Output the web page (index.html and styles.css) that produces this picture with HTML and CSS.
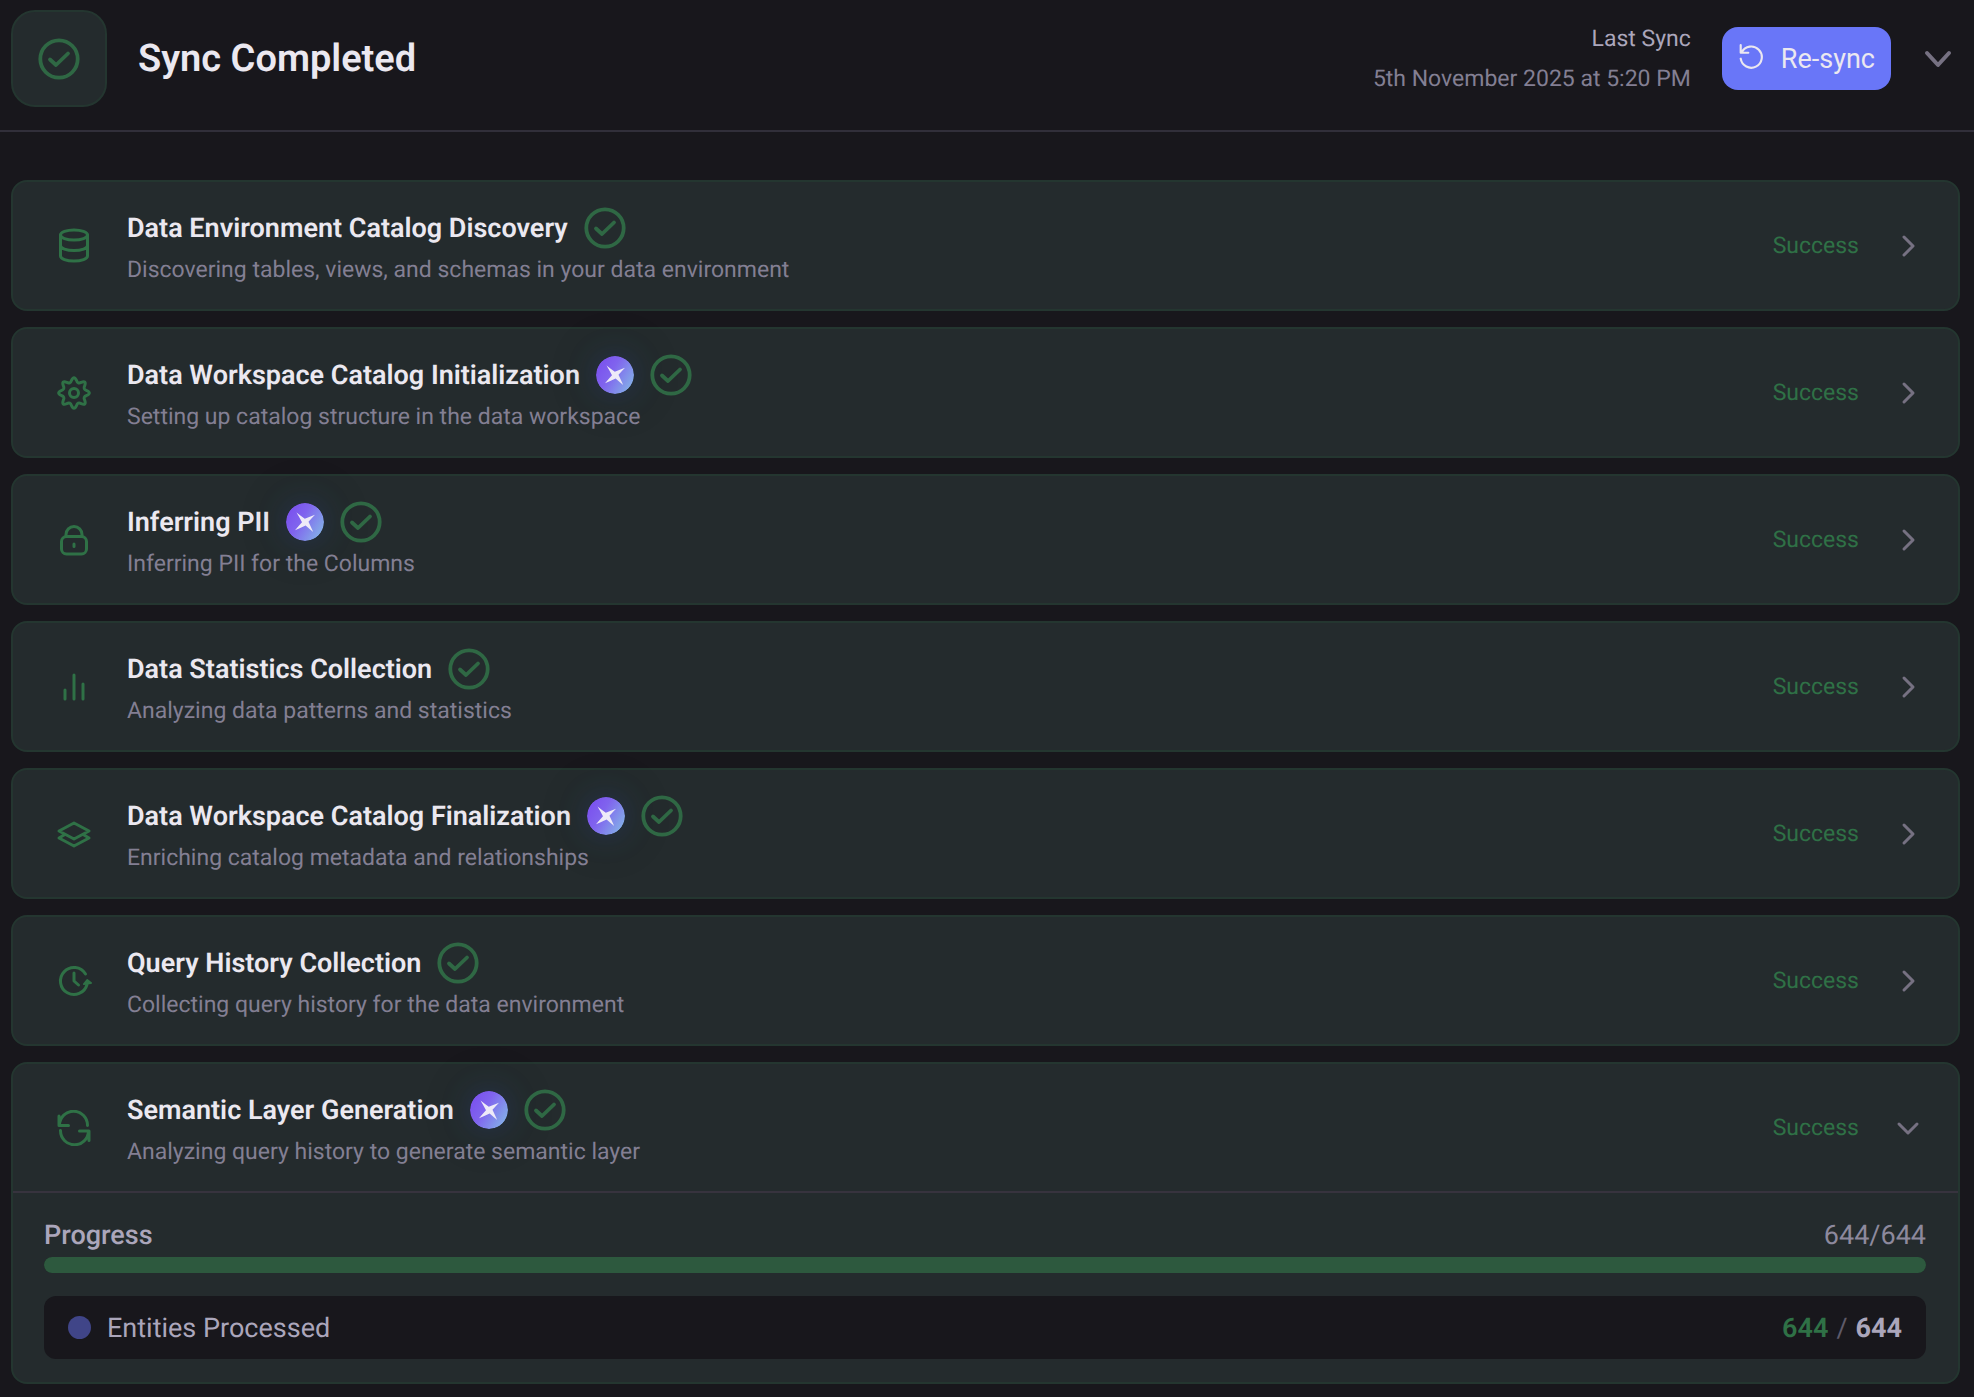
FILE: index.html
```html
<!DOCTYPE html>
<html lang="en">
<head>
<meta charset="utf-8">
<title>Sync Completed</title>
<link rel="stylesheet" href="styles.css">
</head>
<body>
<svg class="defs" aria-hidden="true">
  <defs>
    <linearGradient id="spark-fill" x1="0" y1="0.2" x2="1" y2="0.8">
      <stop offset="0" stop-color="#7a4fee"/>
      <stop offset="0.4" stop-color="#8064ee"/>
      <stop offset="1" stop-color="#84b4e8"/>
    </linearGradient>
    <symbol id="check" viewBox="0 0 42 42">
      <circle cx="21" cy="21" r="18.700" stroke-width="3.800"/>
      <path d="M12 21.500l6 5.500L30 15.500" stroke-width="3.800"/>
    </symbol>
    <symbol id="spark" viewBox="0 0 38 38">
      <circle cx="19" cy="19" r="19" fill="url(#spark-fill)" stroke="none"/>
      <path d="M10.500 9.500Q15.500 13.500 18.800 15.700Q23.500 14 29 11.800Q25.500 15.500 22.500 18.700Q25 24 27.200 29Q23 25.500 19.600 22.500Q14.500 25 9 27.200Q12.500 23 16 19.200Q13.500 14.500 10.500 9.500z" fill="#eeeaf8" stroke="none"/>
    </symbol>
    <symbol id="right" viewBox="0 0 36 36"><path d="M14 9l9 9-9 9" stroke-width="3"/></symbol>
    <symbol id="down" viewBox="0 0 36 36"><path d="M9 14l9 9 9-9" stroke-width="3"/></symbol>
  </defs>
</svg>
<header class="top">
  <div class="badge"><svg class="check"><use href="#check"/></svg></div>
  <h1 class="heading">Sync Completed</h1>
  <div class="last">
    <span class="last-label">Last Sync</span>
    <time class="last-time">5th November 2025 at 5:20 PM</time>
  </div>
  <button class="resync" type="button">
    <svg class="resync-icon" viewBox="0 0 24 24"><path d="M2.500 2v7H9.500M3.500 8.500A9.800 9.800 0 1 1 2.500 14.500" stroke-width="2"/></svg>
    Re-sync
  </button>
  <button class="toggle" type="button" aria-label="Collapse"><svg class="chevron-lg" viewBox="0 0 44 36"><path d="M11 12l11 12 11-12" stroke-width="4"/></svg></button>
</header>
<main class="steps">
  <section class="card">
    <div class="row">
      <svg class="icon" viewBox="0 0 36 36"><ellipse cx="18" cy="7" rx="13.500" ry="5"/><path d="M4.500 7v21c0 2.800 6 5 13.500 5s13.500-2.200 13.500-5V7M4.500 17.500c0 2.800 6 5 13.500 5s13.500-2.200 13.500-5"/></svg>
      <div class="text">
        <h2 class="title">Data Environment Catalog Discovery <svg class="check"><use href="#check"/></svg></h2>
        <p class="desc">Discovering tables, views, and schemas in your data environment</p>
      </div>
      <span class="status">Success</span>
      <button class="toggle" type="button" aria-label="Expand"><svg class="chevron"><use href="#right"/></svg></button>
    </div>
  </section>
  <section class="card">
    <div class="row">
      <svg class="icon" viewBox="-18 -18 36 36"><circle r="4.500"/><path d="M-2.500-12.650Q0-18 2.500-12.650Q3.600-8.800 7.200-10.700Q12.700-12.700 10.700-7.200Q8.800-3.600 12.650-2.500Q18 0 12.650 2.500Q8.800 3.600 10.700 7.200Q12.700 12.700 7.200 10.700Q3.600 8.800 2.500 12.650Q0 18-2.500 12.650Q-3.600 8.800-7.200 10.700Q-12.700 12.700-10.700 7.200Q-8.800 3.600-12.650 2.500Q-18 0-12.650-2.500Q-8.800-3.600-10.700-7.200Q-12.700-12.700-7.200-10.700Q-3.600-8.800-2.500-12.650Z"/></svg>
      <div class="text">
        <h2 class="title">Data Workspace Catalog Initialization <svg class="spark"><use href="#spark"/></svg> <svg class="check"><use href="#check"/></svg></h2>
        <p class="desc">Setting up catalog structure in the data workspace</p>
      </div>
      <span class="status">Success</span>
      <button class="toggle" type="button" aria-label="Expand"><svg class="chevron"><use href="#right"/></svg></button>
    </div>
  </section>
  <section class="card">
    <div class="row">
      <svg class="icon" viewBox="0 0 36 36"><rect x="5.500" y="14.500" width="25" height="17.500" rx="5"/><path d="M10 14.500v-2a8 8 0 0 1 16 0v2M18 22v2.500"/></svg>
      <div class="text">
        <h2 class="title">Inferring PII <svg class="spark"><use href="#spark"/></svg> <svg class="check"><use href="#check"/></svg></h2>
        <p class="desc">Inferring PII for the Columns</p>
      </div>
      <span class="status">Success</span>
      <button class="toggle" type="button" aria-label="Expand"><svg class="chevron"><use href="#right"/></svg></button>
    </div>
  </section>
  <section class="card">
    <div class="row">
      <svg class="icon" viewBox="0 0 36 36"><path d="M9 30V21M18 30V6M27 30V15"/></svg>
      <div class="text">
        <h2 class="title">Data Statistics Collection <svg class="check"><use href="#check"/></svg></h2>
        <p class="desc">Analyzing data patterns and statistics</p>
      </div>
      <span class="status">Success</span>
      <button class="toggle" type="button" aria-label="Expand"><svg class="chevron"><use href="#right"/></svg></button>
    </div>
  </section>
  <section class="card">
    <div class="row">
      <svg class="icon" viewBox="0 0 36 36"><path d="M18 7L33 15 18 23 3 15zM8 19L3 22 18 30 33 22 28 19"/></svg>
      <div class="text">
        <h2 class="title">Data Workspace Catalog Finalization <svg class="spark"><use href="#spark"/></svg> <svg class="check"><use href="#check"/></svg></h2>
        <p class="desc">Enriching catalog metadata and relationships</p>
      </div>
      <span class="status">Success</span>
      <button class="toggle" type="button" aria-label="Expand"><svg class="chevron"><use href="#right"/></svg></button>
    </div>
  </section>
  <section class="card">
    <div class="row">
      <svg class="icon" viewBox="0 0 36 36"><path d="M29.500 11A13.500 13.500 0 1 0 31 21.500M18 10v8l4.500 4"/><path d="M28 21l3.200-4 3.800 3z" fill="currentColor" stroke-width="2"/></svg>
      <div class="text">
        <h2 class="title">Query History Collection <svg class="check"><use href="#check"/></svg></h2>
        <p class="desc">Collecting query history for the data environment</p>
      </div>
      <span class="status">Success</span>
      <button class="toggle" type="button" aria-label="Expand"><svg class="chevron"><use href="#right"/></svg></button>
    </div>
  </section>
  <section class="card">
    <div class="row">
      <svg class="icon" viewBox="0 0 36 36"><path d="M3 6v9.500h9.500M3.500 15A14 14 0 0 1 31.500 15.500M33 30.500V21h-9.500M32.500 21A14 14 0 0 1 4.500 20.500"/></svg>
      <div class="text">
        <h2 class="title">Semantic Layer Generation <svg class="spark"><use href="#spark"/></svg> <svg class="check"><use href="#check"/></svg></h2>
        <p class="desc">Analyzing query history to generate semantic layer</p>
      </div>
      <span class="status">Success</span>
      <button class="toggle" type="button" aria-label="Collapse"><svg class="chevron"><use href="#down"/></svg></button>
    </div>
    <div class="details">
      <div class="progress-head"><span class="progress-label">Progress</span><span>644/644</span></div>
      <div class="track"><div class="fill" style="width: 100%"></div></div>
      <div class="entity">
        <span class="dot"></span>
        <span class="entity-name">Entities Processed</span>
        <span class="count"><b class="done">644</b><span class="slash">/</span><b>644</b></span>
      </div>
    </div>
  </section>
</main>
</body>
</html>
```
FILE: styles.css
```css
* { box-sizing: border-box; }

body {
  margin: 0;
  background: #18171c;
  color: #ebe8f0;
  font-family: Roboto, "Liberation Sans", sans-serif;
  text-rendering: geometricPrecision;
}

h1, h2, p { margin: 0; }

svg {
  flex: none;
  fill: none;
  stroke: currentColor;
  stroke-linecap: round;
  stroke-linejoin: round;
}

button {
  border: 0;
  padding: 0;
  background: none;
  color: inherit;
  font: inherit;
}

.defs { position: absolute; width: 0; height: 0; }

.top {
  display: flex;
  align-items: center;
  padding: 10px 14px 23px 11px;
  border-bottom: 2px solid #312f3a;
}

.badge {
  display: grid;
  place-items: center;
  width: 96px;
  height: 97px;
  border: 2px solid #243630;
  border-radius: 24px;
  background: #242b2d;
}

.check { width: 42px; height: 42px; color: #2f6844; }

.heading {
  margin-left: 31px;
  font-size: 38px;
  line-height: 48px;
  font-weight: 600;
}

.last {
  display: flex;
  flex-direction: column;
  margin-left: auto;
  font-size: 23px;
  line-height: 40px;
  text-align: right;
}

.last-label { color: #aba6bb; }
.last-time { color: #837f93; }

.resync {
  display: flex;
  align-items: center;
  gap: 17px;
  height: 63px;
  margin: 0 25px 0 31px;
  padding: 0 16px;
  border-radius: 16px;
  background: #6976f8;
  font-size: 27px;
}

.resync-icon { width: 26px; height: 26px; margin-bottom: 5px; }

.toggle { display: flex; color: #767182; }
.chevron { width: 36px; height: 36px; }
.chevron-lg { width: 44px; height: 36px; }

.steps {
  display: flex;
  flex-direction: column;
  gap: 16px;
  padding: 48px 14px 13px 11px;
}

.card {
  border: 2px solid #243630;
  border-radius: 16px;
  background: #242b2d;
}

.row {
  display: flex;
  align-items: center;
  height: 127px;
  padding: 0 32px 0 43px;
}

.icon { width: 36px; height: 36px; color: #2f7146; stroke-width: 3; }

.text { flex: 1; margin-left: 35px; padding-top: 6px; }

.title {
  display: flex;
  align-items: center;
  gap: 16px;
  font-size: 27px;
  line-height: 42px;
  font-weight: 600;
}

.desc { color: #837f93; font-size: 23px; line-height: 42px; }

.spark {
  width: 38px;
  height: 38px;
  border-radius: 50%;
  box-shadow: 0 0 32px rgba(50, 80, 190, 0.24), 0 0 64px rgba(40, 90, 60, 0.14);
}

.status {
  margin-right: 31px;
  color: #2f7146;
  font-size: 23px;
}

.details {
  padding: 25px 32px 23px 31px;
  border-top: 2px solid #37333e;
}

.progress-head {
  display: flex;
  justify-content: space-between;
  color: #8d899d;
  font-size: 27px;
  line-height: 34px;
}

.progress-label { color: #aba6bb; font-weight: 500; }

.track {
  height: 16px;
  margin: 5px 0 23px;
  border-radius: 8px;
  background: #18171c;
}

.fill { height: 100%; border-radius: 8px; background: #2d593e; }

.entity {
  display: flex;
  align-items: center;
  height: 63px;
  padding: 0 24px;
  border-radius: 12px;
  background: #18171c;
  color: #aba6bb;
  font-size: 27px;
}

.dot { width: 23px; height: 23px; border-radius: 50%; background: #404588; }
.entity-name { margin-left: 16px; }
.count { display: flex; gap: 8px; margin-left: auto; }
.count b { font-weight: 700; }
.count .done { color: #2f7146; font-weight: 600; }
.slash { color: #5e5a69; }
```
